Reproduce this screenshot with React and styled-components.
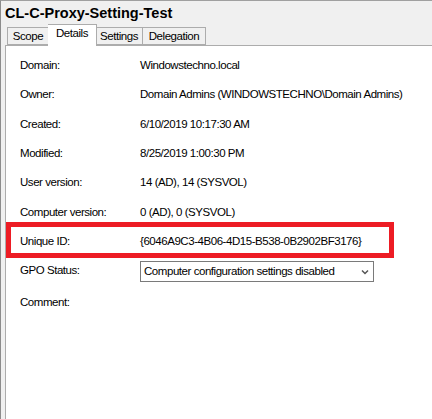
import React from "react";
import styled, { createGlobalStyle } from "styled-components";

const GlobalStyle = createGlobalStyle`
  html, body {
    margin: 0;
    padding: 0;
    background: #ffffff;
  }
  body {
    font-family: "Liberation Sans", Arial, sans-serif;
    font-size: 11.5px;
    letter-spacing: -0.45px;
    color: #000000;
  }
`;

const tabs = [
  { name: "Scope", width: 42 },
  { name: "Details", width: 49 },
  { name: "Settings", width: 47 },
  { name: "Delegation", width: 63 },
];

const details = [
  { label: "Domain:", value: "Windowstechno.local" },
  { label: "Owner:", value: "Domain Admins (WINDOWSTECHNO\\Domain Admins)" },
  { label: "Created:", value: "6/10/2019 10:17:30 AM" },
  { label: "Modified:", value: "8/25/2019 1:00:30 PM" },
  { label: "User version:", value: "14 (AD), 14 (SYSVOL)" },
  { label: "Computer version:", value: "0 (AD), 0 (SYSVOL)" },
  {
    label: "Unique ID:",
    value: "{6046A9C3-4B06-4D15-B538-0B2902BF3176}",
    marked: true,
  },
];

const App = () => {
  return (
    <>
      <GlobalStyle />
      <Window>
        <Title>CL-C-Proxy-Setting-Test</Title>
        <TabStrip>
          {tabs.map((t) => (
            <Tab key={t.name} $width={t.width} $active={t.name === "Details"}>
              {t.name}
            </Tab>
          ))}
        </TabStrip>
        <Panel>
          {details.map((d) => (
            <Row key={d.label} $marked={d.marked}>
              <Label>{d.label}</Label>
              <Value>{d.value}</Value>
            </Row>
          ))}
          <Row $tall>
            <Label>GPO Status:</Label>
            <Combo>
              <span>Computer configuration settings disabled</span>
              <svg width="8" height="6" viewBox="0 0 8 6">
                <path
                  d="M1 1.5 L4 4.5 L7 1.5"
                  fill="none"
                  stroke="#555555"
                  strokeWidth="1.5"
                />
              </svg>
            </Combo>
          </Row>
          <Row>
            <Label>Comment:</Label>
          </Row>
        </Panel>
      </Window>
    </>
  );
};

export default App;

const Window = styled.div`
  width: 432px;
  height: 419px;
  box-sizing: border-box;
  background: #f0f0f0;
  border-left: 1px solid #8c8c8c;
  border-top: 1px solid #a0a0a0;
  display: flex;
  flex-direction: column;
  overflow: hidden;
`;

const Title = styled.div`
  font-weight: bold;
  font-size: 14.5px;
  letter-spacing: 0;
  line-height: 17px;
  padding: 4px 0 0 4px;
  height: 20px;
  box-sizing: border-box;
`;

const TabStrip = styled.div`
  display: flex;
  align-items: flex-end;
  height: 24px;
  margin-left: 6px;
  position: relative;
  z-index: 1;
`;

const Tab = styled.div`
  width: ${(p) => p.$width}px;
  box-sizing: border-box;
  height: ${(p) => (p.$active ? 22 : 18)}px;
  margin: 0 ${(p) => (p.$active ? -1 : 0)}px ${(p) => (p.$active ? -1 : 0)}px;
  background: ${(p) => (p.$active ? "#ffffff" : "#f0f0f0")};
  border: 1px solid #acacac;
  border-bottom: ${(p) => (p.$active ? "none" : "1px solid #acacac")};
  display: flex;
  align-items: ${(p) => (p.$active ? "flex-start" : "center")};
  justify-content: center;
  padding-top: ${(p) => (p.$active ? 2 : 0)}px;
  white-space: nowrap;
  position: relative;
  z-index: ${(p) => (p.$active ? 2 : 1)};
  & + & {
    border-left: ${(p) => (p.$active ? "1px solid #acacac" : "none")};
  }
`;

const Panel = styled.div`
  flex: 1;
  margin-left: 4px;
  background: #ffffff;
  border-left: 1px solid #acacac;
  border-top: 1px solid #acacac;
  padding: 12px 0 0 14px;
`;

const Row = styled.div`
  position: relative;
  display: grid;
  grid-template-columns: 120px 1fr;
  align-items: start;
  height: ${(p) => (p.$tall ? 32 : 29.33)}px;
  line-height: 15px;

  ${(p) =>
    p.$marked &&
    `
    &::after {
      content: "";
      position: absolute;
      left: -14px;
      top: -12px;
      width: 388px;
      height: 36px;
      box-sizing: border-box;
      border: 5px solid #ed1c24;
      pointer-events: none;
    }
  `}
`;

const Label = styled.span`
  white-space: nowrap;
`;

const Value = styled.span`
  white-space: nowrap;
`;

const Combo = styled.div`
  width: 234px;
  height: 21px;
  box-sizing: border-box;
  border: 1px solid #7a7a7a;
  background: #ffffff;
  display: flex;
  align-items: center;
  justify-content: space-between;
  padding: 0 4px 0 3px;
  margin-top: -2px;

  span {
    white-space: nowrap;
  }
`;
